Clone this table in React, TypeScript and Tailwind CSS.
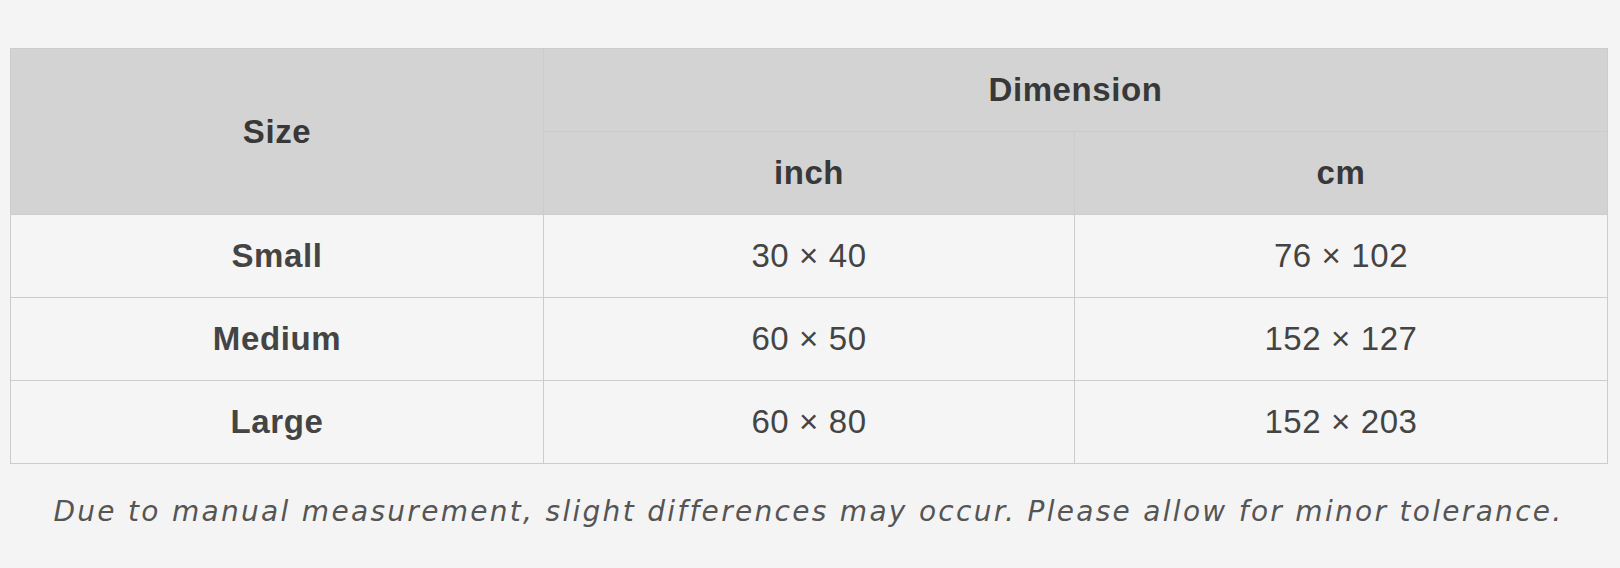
import React from "react";

const rows = [
  { size: "Small", inch: "30 × 40", cm: "76 × 102" },
  { size: "Medium", inch: "60 × 50", cm: "152 × 127" },
  { size: "Large", inch: "60 × 80", cm: "152 × 203" },
];

export default function App() {
  return (
    <div className="min-h-[568px] w-full bg-[#f4f4f4] pt-[48px] pl-[10px]">
      <table
        className="w-[1597px] table-fixed border-collapse border border-[#cccccc] text-center"
        style={{ fontFamily: '"Liberation Sans", Arial, sans-serif' }}
      >
        <colgroup>
          <col className="w-[533px]" />
          <col className="w-[531px]" />
          <col className="w-[533px]" />
        </colgroup>
        <thead>
          <tr className="h-[83px]">
            <th
              rowSpan={2}
              className="border border-[#cccccc] bg-[#d3d3d3] p-0 text-[33px] font-bold tracking-[0.6px] text-[#383838]"
            >
              Size
            </th>
            <th
              colSpan={2}
              className="border border-[#cccccc] bg-[#d3d3d3] p-0 text-[33px] font-bold tracking-[0.6px] text-[#383838]"
            >
              Dimension
            </th>
          </tr>
          <tr className="h-[83px]">
            <th className="border border-[#cccccc] bg-[#d3d3d3] p-0 text-[33px] font-bold tracking-[0.6px] text-[#383838]">
              inch
            </th>
            <th className="border border-[#cccccc] bg-[#d3d3d3] p-0 text-[33px] font-bold tracking-[0.6px] text-[#383838]">
              cm
            </th>
          </tr>
        </thead>
        <tbody>
          {rows.map((r) => (
            <tr key={r.size} className="h-[83px]">
              <td className="border border-[#cccccc] bg-[#f5f5f5] p-0 text-[33px] font-bold tracking-[0.6px] text-[#444444]">
                {r.size}
              </td>
              <td className="border border-[#cccccc] bg-[#f5f5f5] p-0 text-[33px] tracking-[0.6px] text-[#444444]">
                {r.inch}
              </td>
              <td className="border border-[#cccccc] bg-[#f5f5f5] p-0 text-[33px] tracking-[0.6px] text-[#444444]">
                {r.cm}
              </td>
            </tr>
          ))}
        </tbody>
      </table>
      <p
        className="mt-[28px] w-[1597px] text-center text-[28px] italic leading-[40px] tracking-[2.3px] text-[#555555]"
        style={{ fontFamily: '"DejaVu Sans", "Open Sans", sans-serif' }}
      >
        Due to manual measurement, slight differences may occur. Please allow for minor tolerance.
      </p>
    </div>
  );
}
